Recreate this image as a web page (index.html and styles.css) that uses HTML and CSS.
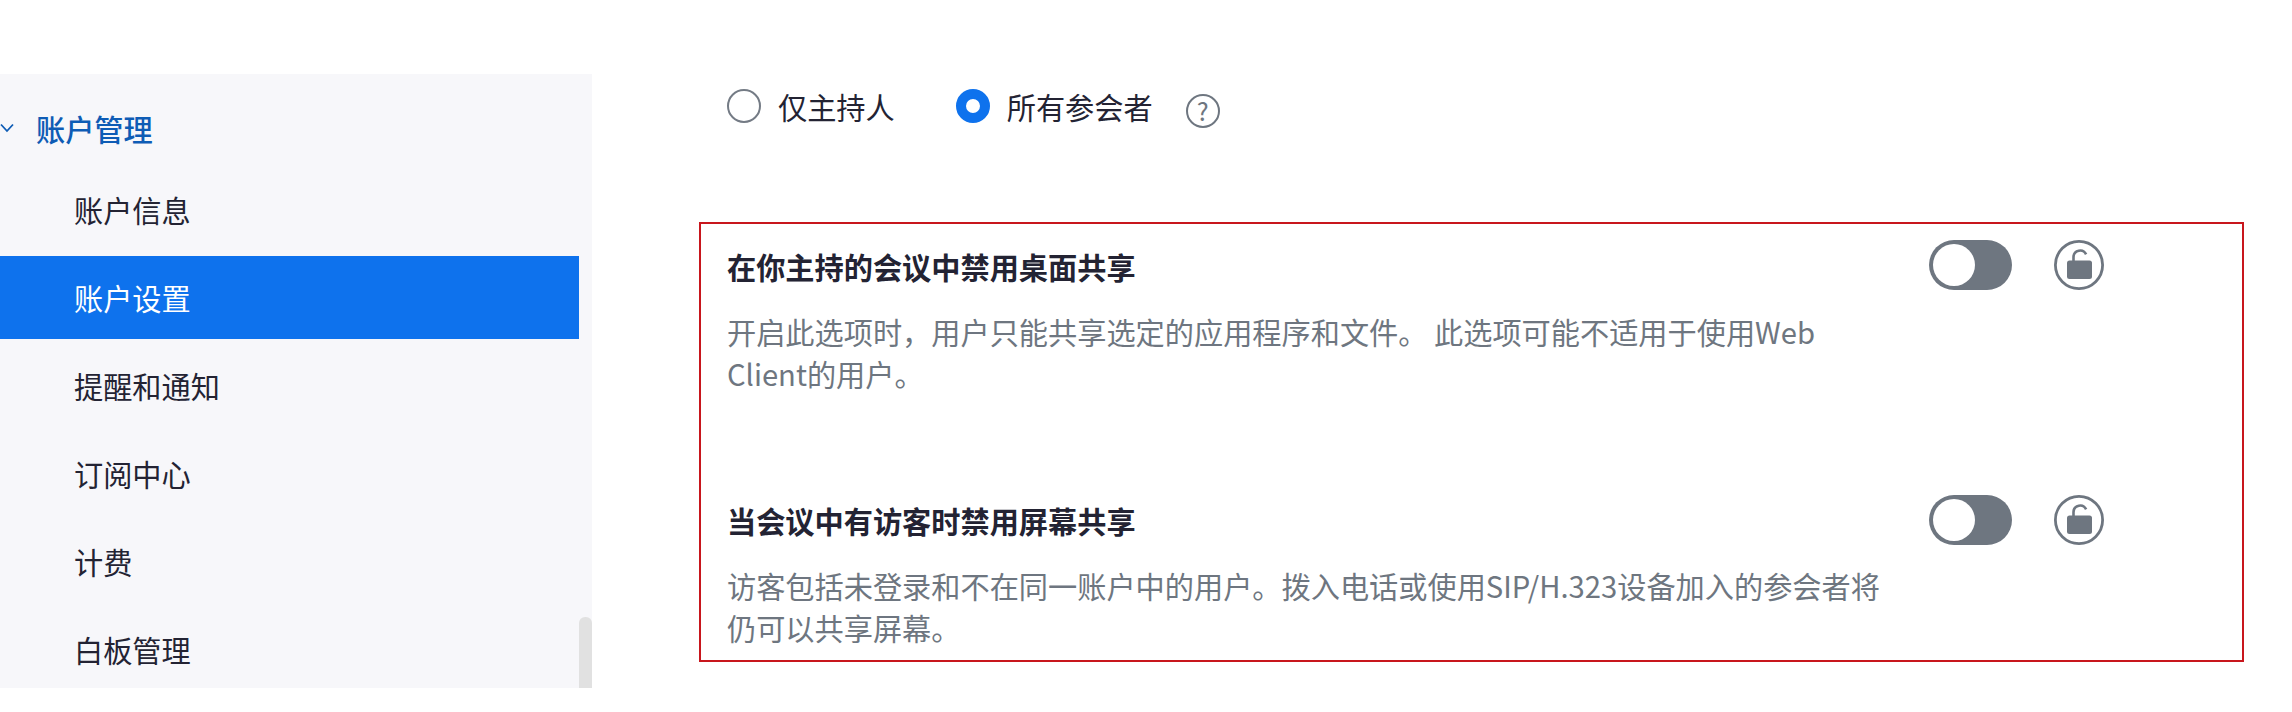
FILE: index.html
```html
<!DOCTYPE html>
<html lang="zh-CN">
<head>
    <meta charset="UTF-8">
    <meta name="viewport" content="width=device-width, initial-scale=1.0">
    <title>账户设置</title>

    <link rel="stylesheet" href="styles.css">

</head>
<body>

    <aside class="sidebar">
        <nav class="menu">
            <div class="menu-heading">
                <svg class="chevron" width="14" height="10" viewBox="0 0 14 10"><path d="M1 1.5 L7 8 L13 1.5" fill="none" stroke="#0e5cb5" stroke-width="1.8"/></svg>
                <span>账户管理</span>
            </div>
            <a class="menu-item">账户信息</a>
            <a class="menu-item active">账户设置</a>
            <a class="menu-item">提醒和通知</a>
            <a class="menu-item">订阅中心</a>
            <a class="menu-item">计费</a>
            <a class="menu-item">白板管理</a>
        </nav>
        <div class="scroll-track">
            <div class="scroll-thumb"></div>
        </div>
    </aside>

    <main class="content">
        <div class="radio-row">
            <label class="radio-option">
                <span class="radio"></span>
                <span>仅主持人</span>
            </label>
            <label class="radio-option">
                <span class="radio checked"></span>
                <span>所有参会者</span>
            </label>
            <span class="help">?</span>
        </div>

        <section class="highlight-box">
            <div class="setting">
                <div class="setting-text">
                    <div class="setting-title">在你主持的会议中禁用桌面共享</div>
                    <p class="setting-desc">开启此选项时，用户只能共享选定的应用程序和文件。 此选项可能不适用于使用Web Client的用户。</p>
                </div>
                <div class="toggle"><span class="knob"></span></div>
                <svg class="lock" width="50" height="50" viewBox="0 0 50 50">
                    <circle cx="25" cy="25" r="23.6" fill="none" stroke="#6e7680" stroke-width="2.8"/>
                    <path d="M19.5 21 v-4 a6.6 6.6 0 0 1 12.6 -2.6" fill="none" stroke="#6e7680" stroke-width="2.6"/>
                    <rect x="13" y="20.5" width="25" height="18.5" rx="2.5" fill="#6e7680"/>
                </svg>
            </div>

            <div class="setting">
                <div class="setting-text">
                    <div class="setting-title">当会议中有访客时禁用屏幕共享</div>
                    <p class="setting-desc">访客包括未登录和不在同一账户中的用户。拨入电话或使用SIP/H.323设备加入的参会者将仍可以共享屏幕。</p>
                </div>
                <div class="toggle"><span class="knob"></span></div>
                <svg class="lock" width="50" height="50" viewBox="0 0 50 50">
                    <circle cx="25" cy="25" r="23.6" fill="none" stroke="#6e7680" stroke-width="2.8"/>
                    <path d="M19.5 21 v-4 a6.6 6.6 0 0 1 12.6 -2.6" fill="none" stroke="#6e7680" stroke-width="2.6"/>
                    <rect x="13" y="20.5" width="25" height="18.5" rx="2.5" fill="#6e7680"/>
                </svg>
            </div>
        </section>
    </main>

</body>
</html>
```

FILE: styles.css
```css
body {
    margin: 0;
    height: 712px;
    overflow: hidden;
    display: flex;
    align-items: flex-start;
    background-color: #ffffff;
    color: #232333;
    font-family: "Noto Sans CJK SC", "Liberation Sans", sans-serif;
    font-size: 29.2px;
}

/* Sidebar */
.sidebar {
    width: 592px;
    height: 614px;
    margin-top: 74px;
    display: flex;
    background-color: #f7f7fa;
}

.menu {
    flex: 1;
    padding-top: 15px;
}

.menu-heading {
    height: 78px;
    margin-bottom: 1px;
    display: flex;
    align-items: center;
    color: #0e5cb5;
    font-weight: 500;
}

.chevron {
    margin-right: 22px;
}

.menu-item {
    height: 83px;
    box-sizing: border-box;
    margin-bottom: 5px;
    padding: 0 0 2px 74px;
    display: flex;
    align-items: center;
}

.menu-item.active {
    background-color: #0e72ed;
    color: #ffffff;
}

.scroll-track {
    width: 13px;
    display: flex;
    align-items: flex-end;
}

.scroll-thumb {
    width: 100%;
    height: 71px;
    background-color: #e1e1e1;
    border-radius: 6px 6px 0 0;
}

/* Main column */
.content {
    margin-left: 107px;
    width: 1545px;
}

.radio-row {
    height: 34px;
    margin-top: 89px;
    padding-left: 28px;
    display: flex;
    align-items: center;
}

.radio-option {
    display: flex;
    align-items: center;
    gap: 17px;
    margin-right: 61px;
}

.radio-option:nth-child(2) {
    margin-right: 33px;
}

.radio {
    width: 34px;
    height: 34px;
    box-sizing: border-box;
    border: 2px solid #747b85;
    border-radius: 50%;
    background-color: #ffffff;
}

.radio.checked {
    border: 10px solid #0e72ed;
}

.help {
    width: 34px;
    height: 34px;
    margin-top: 10px;
    box-sizing: border-box;
    border: 2.5px solid #6e7680;
    border-radius: 50%;
    color: #6e7680;
    font-size: 25px;
    line-height: 29px;
    text-align: center;
}

.highlight-box {
    height: 440px;
    box-sizing: border-box;
    margin-top: 99px;
    padding: 16px 0 0 26px;
    border: 2px solid #c8161d;
}

.setting {
    display: flex;
    align-items: flex-start;
    margin-bottom: 101px;
}

.setting-text {
    width: 1165px;
    margin-right: 37px;
    padding-top: 5px;
}

.setting + .setting .setting-text {
    padding-top: 4px;
}

.setting-title {
    line-height: 42px;
    font-weight: 700;
}

.setting-desc {
    margin: 23px 0 0 0;
    line-height: 42px;
    color: #6e7680;
}

.toggle {
    width: 83px;
    height: 50px;
    margin-right: 42px;
    padding: 4px;
    box-sizing: border-box;
    border-radius: 25px;
    background-color: #6e7680;
}

.knob {
    display: block;
    width: 42px;
    height: 42px;
    border-radius: 50%;
    background-color: #ffffff;
}
```
